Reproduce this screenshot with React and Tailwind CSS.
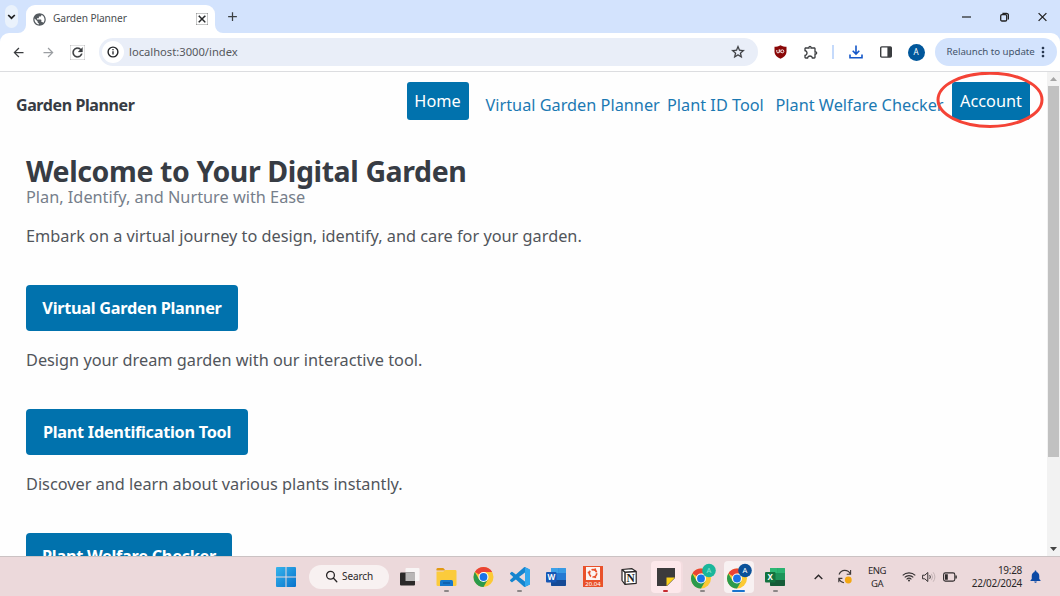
import React from "react";
import {
  MdArrowBack, MdArrowForward, MdRefresh, MdPublic, MdStarOutline, MdOutlineExtension,
  MdNotifications, MdClose, MdKeyboardArrowDown, MdAdd, MdMoreVert,
} from "react-icons/md";

function TabStrip() {
  return (
    <div className="flex h-[33px] items-end bg-[#d3e3fd]">
      <div className="mb-[5px] ml-[5px] flex h-[23px] w-[23px] items-center justify-center rounded-lg bg-[#eaf2fc]">
        <svg width="9" height="6" viewBox="0 0 9 6" fill="none" stroke="#1f2022" strokeWidth="1.7"><path d="M1.2 1l3.3 3.2L7.8 1" /></svg>
      </div>
      <svg className="ml-auto shrink-0" width="8" height="8" viewBox="0 0 8 8"><path d="M8 0v8H0a8 8 0 0 0 8-8z" fill="#fff" /></svg>
      <div className="flex h-7 w-[189px] shrink-0 items-center rounded-t-[9px] bg-white pl-1.5">
        <MdPublic className="h-[15px] w-[15px] text-[#555b60]" />
        <span className="ml-1.5 text-[10.2px] tracking-[-0.1px] text-[#4a4d51]">Garden Planner</span>
        <MdClose className="mr-[7px] ml-auto h-3 w-3 text-[#1f2022]" strokeWidth="1" stroke="currentColor" />
      </div>
      <svg className="shrink-0" width="8" height="8" viewBox="0 0 8 8"><path d="M0 0v8h8a8 8 0 0 1-8-8z" fill="#fff" /></svg>
      <MdAdd className="mb-[9px] ml-[2px] h-[15px] w-[15px] shrink-0 text-[#3c4043]" />
      <div className="mr-[13px] mb-[10px] flex w-[807px] shrink-0 items-center justify-end gap-[29px]">
        <svg width="9" height="12" viewBox="0 0 9 12"><path d="M0 6h9" stroke="#222" strokeWidth="1.2" /></svg>
        <svg width="9" height="12" viewBox="0 0 9 12" fill="none" stroke="#222" strokeWidth="1.3"><rect x=".7" y="3.7" width="6" height="6.3" rx="1.3" /><path d="M2.4 2.3h4q2 0 2 2v4.2" /></svg>
        <svg width="9" height="12" viewBox="0 0 9 12"><path d="M.6 2.1l7.8 7.8M8.4 2.1L.6 9.9" stroke="#222" strokeWidth="1.3" /></svg>
      </div>
    </div>
  );
}

function Toolbar() {
  return (
    <div className="bg-[#d3e3fd]">
      <div className="flex h-[39px] items-center rounded-t-[9px] border-b border-[#dcdde0] bg-white">
        <MdArrowBack className="ml-[11px] h-[15px] w-[15px] text-[#3a3c3f]" />
        <MdArrowForward className="ml-[15px] h-[15px] w-[15px] text-[#9b9ea2]" />
        <MdRefresh className="ml-[14px] h-[15px] w-[15px] text-[#3a3c3f]" strokeWidth=".5" stroke="currentColor" />
        <div className="ml-[14px] flex h-7 w-[659px] items-center rounded-full bg-[#e9eef8] pl-[3px]">
          <div className="flex h-[22px] w-[22px] items-center justify-center rounded-full bg-white">
            <svg width="12" height="12" viewBox="0 0 12 12" fill="none" stroke="#232528"><circle cx="6" cy="6" r="4.9" strokeWidth="1.4" /><path d="M6 5.2v3.4M6 3.1v1.2" strokeWidth="1.3" /></svg>
          </div>
          <span className="ml-[5px] text-[11.2px] text-[#55585d]">localhost:3000/index</span>
          <MdStarOutline className="mr-3 ml-auto h-4 w-4 text-[#37393c]" stroke="currentColor" strokeWidth=".3" />
        </div>
        <svg className="ml-4" width="13" height="14" viewBox="0 0 13 14">
          <path d="M6.5.3C4.5 1.5 2.4 1.8.5 1.8v5.1c0 3 2.6 5.3 6 6.9 3.4-1.6 6-3.9 6-6.9V1.8c-1.9 0-4-.3-6-1.5z" fill="#8a0808" />
          <path d="M2.8 5v1.7a1.2 1.2 0 0 0 2.4 0V4.4M5.9 4.5v3.3" fill="none" stroke="#fff" strokeWidth=".9" /><circle cx="8.3" cy="6.3" r="1.5" fill="none" stroke="#fff" strokeWidth=".9" />
        </svg>
        <MdOutlineExtension className="ml-4 h-4 w-4 text-[#3e4043]" />
        <div className="ml-[13px] h-3.5 w-[1.5px] bg-[#c5dafb]" />
        <svg className="ml-[15px]" width="14" height="14" viewBox="0 0 14 14" fill="none" stroke="#1457c8" strokeWidth="1.6"><path d="M7 .6v8.2M3.7 5.7L7 9l3.3-3.3M1 9.6v3.2h12V9.6" /></svg>
        <svg className="ml-[17px]" width="12" height="12" viewBox="0 0 12 12"><rect x=".7" y=".9" width="10.6" height="10.2" rx="1" fill="#fff" stroke="#3b3d40" strokeWidth="1.4" /><path d="M7.4 1h3.9v10H7.4z" fill="#3b3d40" /></svg>
        <div className="ml-4 flex h-[17px] w-[17px] items-center justify-center rounded-full bg-[#01579b] text-[8px] text-white">A</div>
        <div className="ml-2.5 flex h-7 w-[122px] items-center rounded-full bg-[#d3e3fd] pl-3 whitespace-nowrap">
          <span className="text-[9.7px] tracking-[-0.03px] text-[#43536b]">Relaunch to update</span>
          <MdMoreVert className="ml-auto mr-1.5 h-4 w-4 shrink-0 text-[#24344d]" />
        </div>
      </div>
    </div>
  );
}

const tools = [
  { name: "Virtual Garden Planner", width: "w-[212px]", track: "tracking-[-0.28px]", text: "Design your dream garden with our interactive tool.", textTrack: "tracking-[0px]" },
  { name: "Plant Identification Tool", width: "w-[222px]", track: "tracking-[-0.28px]", text: "Discover and learn about various plants instantly.", textTrack: "tracking-[0px]" },
  { name: "Plant Welfare Checker", width: "w-[206px]", track: "tracking-[-0.28px]", text: "Check on the health of your plants.", textTrack: "tracking-[0px]" },
];

function Page() {
  return (
    <div className="flex h-[484px] overflow-hidden bg-[#fefefe]">
      <main className="min-w-0 flex-1 whitespace-nowrap text-[16.3px] leading-6">
        <nav className="flex h-[66px] items-start pt-2.5">
          <span className="mt-[11px] ml-4 text-[16px] font-bold tracking-[-0.4px] text-[#373c44]">Garden Planner</span>
          <div className="mr-[17px] ml-auto flex items-start text-[#1b79b3]">
            <a className="flex h-[38px] w-[62px] items-center justify-center rounded-[3px] bg-[#0172ad] text-white">Home</a>
            <a className="mt-[11px] ml-[17px] w-[165px]">Virtual Garden Planner</a>
            <a className="mt-[11px] ml-[16.5px] w-[92px]">Plant ID Tool</a>
            <a className="mt-[11px] ml-[16.5px] w-[160px]">Plant Welfare Checker</a>
            <div className="relative ml-[16.5px]">
              <a className="flex h-[38px] w-[78px] items-center justify-center rounded-[3px] bg-[#0172ad] text-white">Account</a>
              <svg className="absolute top-[-11px] left-[-16px] max-w-none" width="108" height="58" viewBox="0 0 108 58"><ellipse cx="54" cy="28.8" rx="52" ry="26.6" fill="none" stroke="#f44336" strokeWidth="3" /></svg>
            </div>
          </div>
        </nav>
        <section className="pt-4 pl-[26px] text-[#51555b]">
          <h1 className="h-[31px] text-[28.5px] leading-[34px] font-bold tracking-[-0.4px] text-[#373c44]">Welcome to Your Digital Garden</h1>
          <p className="text-[#767e8b]">Plan, Identify, and Nurture with Ease</p>
          <p className="mt-[15px] mb-[37px]">Embark on a virtual journey to design, identify, and care for your garden.</p>
          {tools.map((t) => (
            <div key={t.name} className="h-[124px]">
              <button className={"flex h-[46px] items-center justify-center rounded-[4px] bg-[#0172ad] font-bold text-white " + t.width + " " + t.track}>{t.name}</button>
              <p className={"mt-[17px] " + t.textTrack}>{t.text}</p>
            </div>
          ))}
        </section>
      </main>
      <div className="flex w-[13px] flex-col items-center bg-[#f2f2f2]">
        <svg className="my-[5px] shrink-0" width="7" height="4" viewBox="0 0 7 4"><path d="M3.5 0L7 4H0z" fill="#a5a5a5" /></svg>
        <div className="h-[371px] w-[11px] bg-[#c1c1c1]" />
        <svg className="mt-auto mb-[5px] shrink-0" width="7" height="4" viewBox="0 0 7 4"><path d="M0 0h7L3.5 4z" fill="#444" /></svg>
      </div>
    </div>
  );
}

function Chrome({ letter, color, ink }) {
  return (
    <svg width="27" height="26" viewBox="0 0 27 26" className="overflow-visible">
      <g transform={letter ? "translate(2 4.500)" : "translate(3.500 3)"}>
        <circle cx="10" cy="10" r="10" fill="#fcc934" />
        <path d="M10 10L1.340 5A10 10 0 0 1 18.660 5H10z" fill="#ea4335" />
        <path d="M1.340 5A10 10 0 0 0 10 20l4.330-7.500L10 10 5.670 12.500z" fill="#2b9a4b" />
        <circle cx="10" cy="10" r="5" fill="#fff" />
        <circle cx="10" cy="10" r="3.900" fill="#1a73e8" />
      </g>
      {letter && (
        <g>
          <circle cx="20" cy="6.500" r="6.800" fill={color} />
          <text x="20" y="9.300" textAnchor="middle" fontSize="7.500" fill={ink}>{letter}</text>
        </g>
      )}
    </svg>
  );
}

function Slot({ children, mark, active }) {
  return (
    <div className="relative flex w-[36.5px] shrink-0 items-center justify-center">
      <div className={"flex h-8 w-[30px] items-center justify-center rounded-[4px] " + (active || "")}>{children}</div>
      {mark && <div className={"absolute bottom-[4px] h-[2.5px] rounded-full " + mark} />}
    </div>
  );
}

const dot = "w-[5px] bg-[#8d8687]";

function Office({ letter, a, b, c, d }) {
  return (
    <svg width="20" height="20" viewBox="0 0 20 20">
      <rect x="5" y="1" width="15" height="18" rx="1.200" fill={b} />
      <path d="M5 1h7.500v5H5z" fill={a} /><path d="M12.500 1H20v5h-7.500z" fill={a} opacity=".85" />
      <path d="M5 13h15v4.800q0 1.200-1.200 1.200H6.200Q5 19 5 17.800z" fill={c} />
      <rect x="0" y="5" width="10.500" height="10.500" rx="1" fill={d} />
      <text x="5.250" y="13.200" textAnchor="middle" fontSize="8" fontWeight="700" fill="#fff">{letter}</text>
    </svg>
  );
}

function Taskbar() {
  return (
    <div className="flex h-10 items-stretch border-t border-[#cbc2c3] bg-[#ecd9db] text-[#2b2728]">
      <div className="ml-[276px] flex items-center">
        <svg width="20" height="20" viewBox="0 0 20 20">
          <defs><linearGradient id="win" x1="0" y1="0" x2="1" y2="1"><stop stopColor="#35b4ec" /><stop offset="1" stopColor="#0872cc" /></linearGradient></defs>
          <path d="M0 1q0-1 1-1h8.500v9.500H0zM10.500 0H19q1 0 1 1v8.500h-9.500zM0 10.500h9.500V20H1q-1 0-1-1zM10.500 10.500H20V19q0 1-1 1h-8.500z" fill="url(#win)" />
        </svg>
      </div>
      <div className="ml-[13px] flex h-6 w-20 items-center self-center rounded-full bg-[#f8f1f1] pl-4">
        <svg width="13" height="13" viewBox="0 0 13 13" fill="none" stroke="#282526" strokeWidth="1.300"><circle cx="5.500" cy="5.200" r="3.900" /><path d="M8.300 8l3.500 3.700" strokeLinecap="round" /></svg>
        <span className="ml-1 text-[10px] tracking-[-0.1px]">Search</span>
      </div>
      <div className="ml-[3px] flex">
        <Slot>
          <svg width="20" height="20" viewBox="0 0 20 20"><rect x="5.500" y="1" width="14" height="13" rx="1" fill="#f8f5f5" /><rect x="0" y="5.500" width="15" height="13" rx="1" fill="#2b2929" /><path d="M5.500 5.500H15V14H5.500z" fill="#b9b7b7" /></svg>
        </Slot>
        <Slot mark={dot}>
          <svg width="21" height="20" viewBox="0 0 21 20"><path d="M.5 2.300Q.5 1 1.800 1h5.500l2.200 2.500H.5z" fill="#e29a12" /><path d="M.5 4.500h6.800L9.500 3h9.700q1.300 0 1.300 1.300V17.700q0 1.300-1.300 1.300H1.800Q.5 19 .5 17.700z" fill="#fbcb3c" /><path d="M4 19v-4.500Q4 13 5.500 13h10q1.500 0 1.500 1.500V19z" fill="#1577cc" /><path d="M7 16h7" stroke="#0a4d92" strokeWidth="1" /></svg>
        </Slot>
        <Slot><Chrome /></Slot>
        <Slot mark={dot}>
          <svg width="20" height="20" viewBox="0 0 24 24"><path fill="#1685cf" fillRule="evenodd" d="M23.150 2.587L18.210.21a1.494 1.494 0 0 0-1.705.29l-9.460 8.630-4.120-3.128a.999.999 0 0 0-1.276.057L.327 7.261A1 1 0 0 0 .326 8.740L3.899 12 .326 15.260a1 1 0 0 0 .001 1.479L1.650 17.940a.999.999 0 0 0 1.276.057l4.120-3.128 9.460 8.630a1.492 1.492 0 0 0 1.704.29l4.942-2.377A1.500 1.500 0 0 0 24 20.060V3.939a1.500 1.500 0 0 0-.85-1.352zm-5.146 14.861L10.826 12l7.178-5.448v10.896z" /><path d="M18 .3l5.200 2.300q.8.400.8 1.300v16.200q0 .9-.8 1.300L18 23.700z" fill="#32a7ed" /></svg>
        </Slot>
        <Slot><Office letter="W" a="#3ca0e8" b="#2579d2" c="#154a96" d="#1757b4" /></Slot>
        <Slot>
          <svg width="20" height="21" viewBox="0 0 20 21"><path d="M0 0h20v21H0z" fill="#e9512a" /><path d="M3 1h14v13H3z" fill="#fcf5f3" /><circle cx="10" cy="7.300" r="3.700" fill="none" stroke="#e9512a" strokeWidth="1.700" strokeDasharray="6.200 1.550" /><circle cx="5.600" cy="6.500" r="1" fill="#e9512a" /><circle cx="12.200" cy="3.300" r="1" fill="#e9512a" /><circle cx="12.200" cy="11.300" r="1" fill="#e9512a" /><text x="10" y="20" textAnchor="middle" fontSize="6" fill="#fff">20.04</text></svg>
        </Slot>
        <Slot>
          <svg width="16" height="17" viewBox="0 0 16 17"><path d="M1 1.500L11 .7l4.200 2.800v11.800L4 16.300 1 12.500z" fill="#fff" stroke="#272424" strokeWidth="1.200" strokeLinejoin="round" /><path d="M1 1.500l3 2.800 11.200-.8M4 4.300v12" fill="none" stroke="#272424" strokeWidth="1.400" /><text x="9.600" y="13.600" textAnchor="middle" fontSize="11.500" fontWeight="700" fontFamily="Liberation Serif, serif" fill="#222">N</text></svg>
        </Slot>
        <Slot mark="w-[5px] bg-[#c62a2f]" active="bg-[#fde8eb] shadow-[2px_0_0_#f3dcdf]">
          <svg width="18" height="18" viewBox="0 0 18 18"><path d="M0 0h18v10l-8 8H0z" fill="#3c3b3c" /><path d="M9.500 9.500H18L9.500 18z" fill="#fcd21b" /></svg>
        </Slot>
        <Slot mark={dot}><Chrome letter="A" color="#1ab69b" ink="#8ae4d6" /></Slot>
        <Slot mark="w-[13px] bg-[#1874ce]" active="bg-[#f8f1f2]"><Chrome letter="A" color="#0b5199" ink="#fff" /></Slot>
        <Slot mark={dot}><Office letter="X" a="#2db774" b="#1d9459" c="#155c38" d="#13733f" /></Slot>
      </div>
      <div className="mr-[17px] ml-auto flex items-center">
        <svg width="9" height="6" viewBox="0 0 9 6" fill="none" stroke="#2b2728" strokeWidth="1.400"><path d="M.7 5l3.800-3.800L8.300 5" /></svg>
        <svg className="ml-[14px]" width="16" height="15" viewBox="0 0 16 15" fill="none" stroke="#3c3839" strokeWidth="1.100"><path d="M2 5.500C4.300 0 11 .2 13.400 5M13.600 1v4.200H9.700M1.800 13.300V9.400h3.600M2 10c1.200 2.500 3 3.500 5 3.700" /><circle cx="11.300" cy="11" r="3.400" fill="#f3a712" stroke="none" /></svg>
        <div className="ml-3 w-[24px] text-center text-[9.5px] leading-[13px] tracking-[-0.4px]">ENG<br />GA</div>
        <svg className="ml-[13px]" width="14" height="11" viewBox="0 0 14 11" fill="none" stroke="#343031" strokeWidth="1.100"><path d="M.7 4.400a9 9 0 0 1 12.600 0M2.700 6.400a6.100 6.100 0 0 1 8.600 0M4.600 8.300a3.400 3.400 0 0 1 4.800 0" /><circle cx="7" cy="9.500" r="1" fill="#343031" stroke="none" /></svg>
        <svg className="ml-[6px]" width="14" height="12" viewBox="0 0 14 12" fill="none" stroke="#343031" strokeWidth="1"><path d="M.6 4.200h2.200L5.800 1.500v9L2.800 7.800H.6zM7.700 4.200q1.300 1.800 0 3.600" /><path d="M9.400 2.800q2.400 3.200 0 6.400M11.200 1.300q3.400 4.700 0 9.400" stroke="#c4b4b6" /></svg>
        <svg className="ml-[7px]" width="14" height="10" viewBox="0 0 14 10"><rect x=".6" y=".9" width="11.200" height="8.200" rx="1.800" fill="none" stroke="#2f2b2c" strokeWidth="1.100" /><path d="M2 2.300h2.800v5.400H2zM12.400 3.400h1.400v3.200h-1.400z" fill="#2f2b2c" /></svg>
        <div className="w-[65px] text-right text-[10px] leading-[13px] tracking-[-0.3px]">19:28<br />22/02/2024</div>
        <MdNotifications className="ml-[6px] h-[15px] w-[15px] text-[#0b49a5]" />
      </div>
    </div>
  );
}

export default function App() {
  return (
    <div className="h-[596px] w-[1060px] overflow-hidden font-['Noto_Sans','Open_Sans',sans-serif]">
      <TabStrip />
      <Toolbar />
      <Page />
      <Taskbar />
    </div>
  );
}
